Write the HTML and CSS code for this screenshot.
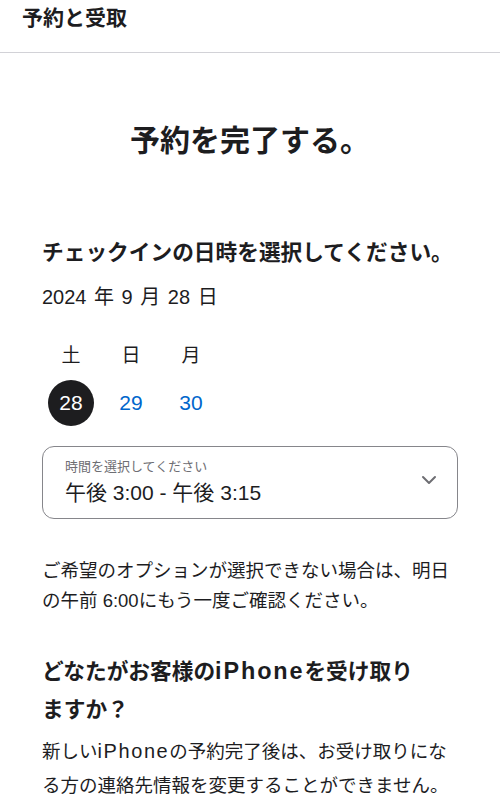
FILE: index.html
```html
<!DOCTYPE html>
<html lang="ja">
<head>
    <meta charset="UTF-8">
    <meta name="viewport" content="width=device-width, initial-scale=1.0">
    <title>予約と受取</title>
    <link rel="stylesheet" href="styles.css">
</head>
<body>
    <header class="top-bar">
        <h1>予約と受取</h1>
    </header>

    <main class="checkout">
        <h2 class="page-title">予約を完了する。</h2>

        <!-- Check-in date and time -->
        <section class="checkin">
            <h3>チェックインの日時を選択してください。</h3>
            <p class="current-date">2024 年 9 月 28 日</p>

            <div class="day-picker">
                <span class="weekday">土</span>
                <span class="weekday">日</span>
                <span class="weekday">月</span>
                <button class="day selected">28</button>
                <button class="day">29</button>
                <button class="day">30</button>
            </div>

            <div class="time-select">
                <div class="time-text">
                    <span class="time-label">時間を選択してください</span>
                    <span class="time-value">午後 3:00 - 午後 3:15</span>
                </div>
                <svg class="chevron" width="16" height="10" viewBox="0 0 16 10">
                    <path d="M2 2 L8 8 L14 2" fill="none" stroke="#6e6e73" stroke-width="2" stroke-linecap="round" stroke-linejoin="round"/>
                </svg>
            </div>

            <p class="note">ご希望のオプションが選択できない場合は、明日の午前 6:00にもう一度ご確認ください。</p>
        </section>

        <!-- Pickup person -->
        <section class="pickup">
            <h3>どなたがお客様の<span class="product">iPhone</span>を受け取り<br>ますか？</h3>
            <p class="note">新しい<span class="product">iPhone</span>の予約完了後は、お受け取りになる方の連絡先情報を変更することができません。</p>
        </section>
    </main>
</body>
</html>
```

FILE: styles.css
```css
body {
    margin: 0;
    font-family: "Liberation Sans", "Noto Sans CJK JP", sans-serif;
    color: #1d1d1f;
    background-color: #ffffff;
}

.top-bar {
    padding: 0 22px 16px;
    border-bottom: 1px solid #d2d2d7;
}

.top-bar h1 {
    margin: 0;
    font-size: 21px;
    line-height: 36px;
    font-weight: 700;
}

.checkout {
    padding: 0 42px;
}

.page-title {
    margin: 68px 0 0;
    text-align: center;
    font-size: 30px;
    line-height: 40px;
    font-weight: 700;
}

.checkin h3,
.pickup h3 {
    margin: 0;
    font-size: 21.7px;
    font-weight: 700;
}

.checkin h3 {
    margin-top: 76px;
    line-height: 32px;
}

.current-date {
    margin: 14px 0 0;
    font-size: 20px;
    line-height: 28px;
    word-spacing: 2px;
}

.day-picker {
    display: grid;
    grid-template-columns: repeat(3, 46px);
    column-gap: 14px;
    row-gap: 10px;
    margin-top: 31px;
    padding-left: 6px;
}

.weekday {
    text-align: center;
    font-size: 19px;
    line-height: 28px;
}

.day {
    width: 46px;
    height: 46px;
    padding: 0;
    border: none;
    border-radius: 50%;
    background: none;
    color: #0066cc;
    font-family: inherit;
    font-size: 21px;
    cursor: pointer;
}

.day.selected {
    background-color: #1d1d1f;
    color: #ffffff;
}

.time-select {
    display: flex;
    align-items: center;
    justify-content: space-between;
    margin-top: 20px;
    padding: 11px 22px 12px;
    border: 1px solid #86868b;
    border-radius: 12px;
}

.time-text {
    display: flex;
    flex-direction: column;
    gap: 4px;
}

.time-label {
    font-size: 13px;
    line-height: 18px;
    color: #6e6e73;
}

.time-value {
    font-size: 21px;
    line-height: 26px;
}

.chevron {
    margin-right: -2px;
    margin-top: -4px;
}

.note {
    margin: 37px 0 0;
    font-size: 18.5px;
    line-height: 30px;
}

.product {
    font-size: 1.08em;
    line-height: 1;
    letter-spacing: 0.08em;
}

.pickup h3 {
    margin-top: 37px;
    line-height: 38px;
}

.pickup .note {
    margin-top: 6px;
    line-height: 34px;
}
```
